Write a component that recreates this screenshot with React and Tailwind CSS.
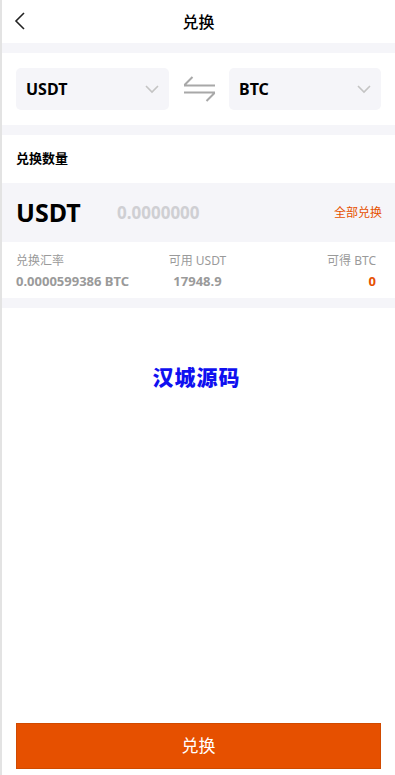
import React from "react";

export default function App() {
  const font = { fontFamily: '"Noto Sans", "Noto Sans CJK SC", sans-serif' };
  return (
    <div style={font} className="w-full h-[775px] bg-white border-l-2 border-[#e3e3e3] flex flex-col overflow-hidden">
      {/* header */}
      <div className="relative h-[43px] flex items-center justify-center">
        <svg className="absolute left-[11px] top-[11px]" width="14" height="20" viewBox="0 0 14 20">
          <path d="M11 2 L3 10 L11 18" fill="none" stroke="#222" strokeWidth="1.6" />
        </svg>
        <span className="text-[16px] font-medium text-black">兑换</span>
      </div>
      <div className="h-[10px] bg-[#f5f5f9]" />
      {/* selects */}
      <div className="h-[72px] flex items-center px-[14px]">
        <div className="w-[153px] h-[42px] rounded-[5px] bg-[#f5f5f9] flex items-center justify-between pl-[10px] pr-[10px]">
          <span className="text-[16px] font-bold text-black">USDT</span>
          <svg width="14" height="9" viewBox="0 0 14 9"><path d="M1 1 L7 7 L13 1" fill="none" stroke="#c4c4c4" strokeWidth="1.6" /></svg>
        </div>
        <div className="flex-1 flex justify-center">
          <svg width="33" height="26" viewBox="0 0 33 26">
            <path d="M1 9.5 L32 9.5 M1.5 9 L9.5 1" fill="none" stroke="#a8a8a8" strokeWidth="2" />
            <path d="M1 16.5 L32 16.5 M31.5 17 L23.5 25" fill="none" stroke="#a8a8a8" strokeWidth="2" />
          </svg>
        </div>
        <div className="w-[152px] h-[42px] rounded-[5px] bg-[#f5f5f9] flex items-center justify-between pl-[10px] pr-[10px]">
          <span className="text-[16px] font-bold text-black">BTC</span>
          <svg width="14" height="9" viewBox="0 0 14 9"><path d="M1 1 L7 7 L13 1" fill="none" stroke="#c4c4c4" strokeWidth="1.6" /></svg>
        </div>
      </div>
      <div className="h-[10px] bg-[#f5f5f9]" />
      {/* amount label */}
      <div className="h-[48px] flex items-center px-[14px]">
        <span className="text-[13px] font-bold text-black">兑换数量</span>
      </div>
      <div className="h-[59px] bg-[#f5f5f9] flex items-center pl-[14px] pr-[13px]">
        <span className="text-[25px] font-bold text-black w-[101px]">USDT</span>
        <span className="text-[17px] font-bold text-[#cfcfd3] flex-1">0.0000000</span>
        <span className="text-[12px] text-[#e65100]">全部兑换</span>
      </div>
      {/* info */}
      <div className="h-[56px] grid grid-cols-3 pl-[14px] pr-[16px] pt-[10px]">
        <div className="flex flex-col">
          <span className="text-[12px] leading-[18px] text-[#9a9a9a]">兑换汇率</span>
          <span className="text-[13px] leading-[22px] font-bold text-[#9a9a9a] whitespace-nowrap">0.0000599386 BTC</span>
        </div>
        <div className="flex flex-col items-center">
          <span className="text-[12px] leading-[18px] text-[#9a9a9a]">可用 USDT</span>
          <span className="text-[13px] leading-[22px] font-bold text-[#9a9a9a]">17948.9</span>
        </div>
        <div className="flex flex-col items-end pr-[3px]">
          <span className="text-[12px] leading-[18px] text-[#9a9a9a]">可得 BTC</span>
          <span className="text-[13px] leading-[22px] font-bold text-[#e65100]">0</span>
        </div>
      </div>
      <div className="h-[10px] bg-[#f5f5f9]" />
      {/* body */}
      <div className="flex-1 flex flex-col items-center pt-[56px]">
        <span className="text-[21px] leading-[26px] font-black text-[#1010f0] tracking-[1px] -ml-[4px]">汉城源码</span>
      </div>
      <div className="px-[14px] pb-[6px]">
        <button className="w-full h-[46px] bg-[#e65000] border border-[#d04a00] text-white text-[17px]">兑换</button>
      </div>
    </div>
  );
}
